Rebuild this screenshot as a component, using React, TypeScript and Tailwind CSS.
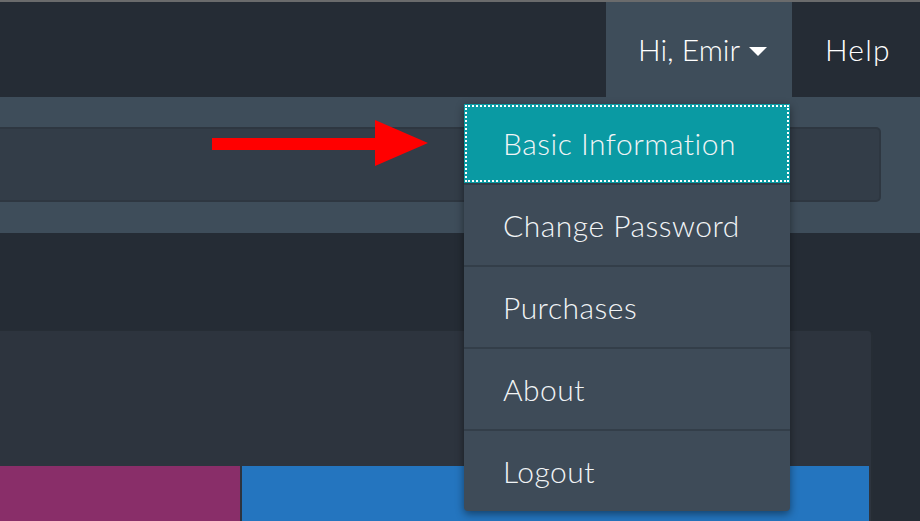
const items = ["Basic Information", "Change Password", "Purchases", "About", "Logout"];

function Arrow() {
  return (
    <svg className="absolute left-[212px] top-[120px]" width="218" height="48" viewBox="0 0 218 48">
      <rect x="0" y="18" width="166" height="12" fill="#ff0000" />
      <polygon points="163,0 216,23 163,46" fill="#ff0000" />
    </svg>
  );
}

function UserMenu() {
  return (
    <div className="absolute left-[464px] top-[104px] w-[326px] rounded-b-[4px] bg-[#3e4b58] shadow-[0_3px_8px_rgba(0,0,0,0.45)]">
      {items.map((label, i) => (
        <div
          key={label}
          className={
            i === 0
              ? "h-[79px] bg-[#0a9aa3] outline-2 outline-dotted outline-white -outline-offset-3 flex items-center pl-[39px]"
              : "h-[82px] border-t-2 border-[#333e49] flex items-center pl-[39px]"
          }
        >
          <span className="text-[30px] font-light text-[#f1f4f6] tracking-[0.5px]">{label}</span>
        </div>
      ))}
    </div>
  );
}

export default function App() {
  return (
    <div className="relative w-[920px] h-[521px] overflow-hidden bg-[#252c35] font-['Lato',sans-serif]">
      <div className="h-[2px] bg-[#6a6b6c]" />
      <header className="h-[95px] flex justify-end">
        <div className="w-[186px] bg-[#3e4d5a] flex items-center pl-[32px] gap-[8px] text-white">
          <span className="text-[30px] font-light">Hi, Emir</span>
          <svg width="20" height="12" viewBox="0 0 20 12" className="mt-[4px]">
            <polygon points="1,1 19,1 10,10" fill="#ffffff" />
          </svg>
        </div>
        <div className="w-[128px] flex items-center pl-[33px]">
          <span className="text-[30px] font-light text-white tracking-[1.2px]">Help</span>
        </div>
      </header>
      <div className="h-[136px] bg-[#3e4d5a] pt-[30px] pr-[39px]">
        <div className="h-[75px] bg-[#333d48] rounded-r-[5px] border-y-2 border-r-2 border-[#2e3741]" />
      </div>
      <div className="h-[97px]" />
      <div className="mr-[47px] h-[200px] bg-[#2d343e] rounded-tr-[5px] border-r-2 border-t border-[#262d35] pt-[135px] pr-[2px]">
        <div className="flex h-full gap-[2px]">
          <div className="w-[240px] bg-[#892e69]" />
          <div className="flex-1 bg-[#2475bf]" />
        </div>
      </div>
      <Arrow />
      <UserMenu />
    </div>
  );
}
